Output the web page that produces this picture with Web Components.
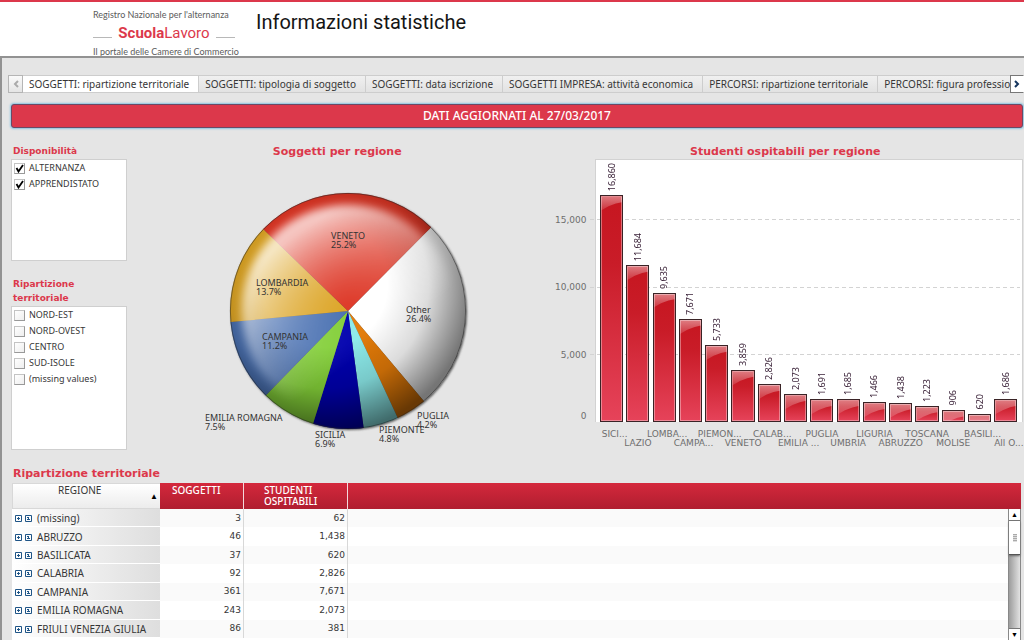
<!DOCTYPE html>
<html lang="it">
<head>
<meta charset="utf-8">
<title>Informazioni statistiche</title>
<style>
html, body { margin: 0; height: 100%; }
body { font-family: "Noto Sans", sans-serif; font-size: 10px; color: #363636; background: #e5e5e5; }
</style>
</head>
<body>
<stats-page>
  <site-header slot="header">Informazioni statistiche</site-header>
  <sheet-tabs slot="tabs"></sheet-tabs>
  <info-banner slot="banner">DATI AGGIORNATI AL 27/03/2017</info-banner>
  <filter-list slot="filters" class="short" heading="Disponibilità" items="ALTERNANZA|APPRENDISTATO" checked></filter-list>
  <filter-list slot="filters" heading="Ripartizione territoriale" items="NORD-EST|NORD-OVEST|CENTRO|SUD-ISOLE|(missing values)"></filter-list>
  <pie-chart slot="pie">Soggetti per regione</pie-chart>
  <bar-chart slot="bars">Studenti ospitabili per regione</bar-chart>
  <region-table slot="table">Ripartizione territoriale</region-table>
</stats-page>

<script>
function define(name, render) {
  customElements.define(name, class extends HTMLElement {
    connectedCallback() {
      if (this.shadowRoot) return;
      this.attachShadow({ mode: 'open' }).innerHTML = render(this);
    }
  });
}

const heading = 'margin: 0; color: #dc384b; font: 700 11px/16px "DejaVu Sans", sans-serif;';

define('stats-page', () => `
<style>
:host { display: flex; flex-direction: column; height: 100vh; min-height: 600px; overflow: hidden; }
main { flex: 1; min-height: 0; display: flex; flex-direction: column; border-top: 2px solid #929292; border-left: 2px solid #929292; padding: 17px 0 0 9px; }
.banner { padding: 11px 1px 0 0; }
.row { display: grid; grid-template-columns: 116px 421fr 476fr; margin-top: 16px; padding-right: 1px; }
.filters { display: flex; flex-direction: column; gap: 16px; }
.table { flex: 1; min-height: 0; display: flex; margin-top: 16px; padding-right: 3px; }
::slotted([slot=table]) { flex: 1; }
</style>
<slot name="header"></slot>
<main>
  <slot name="tabs"></slot>
  <div class="banner"><slot name="banner"></slot></div>
  <div class="row">
    <div class="filters"><slot name="filters"></slot></div>
    <slot name="pie"></slot>
    <slot name="bars"></slot>
  </div>
  <div class="table"><slot name="table"></slot></div>
</main>`);

define('site-header', () => `
<style>
:host { display: flex; align-items: flex-start; height: 54px; background: #fff; border-top: 2px solid #dc384b; font-family: Roboto, sans-serif; }
.logo { width: 142px; margin-left: 93px; text-decoration: none; color: #5b5b5b; font: 9px/12px Lato, sans-serif; padding-top: 7px; white-space: nowrap; }
.logo > span { display: block; }
.logo .name { display: flex; align-items: center; justify-content: space-between; color: #dc384b; font: 15px/18px Roboto, sans-serif; margin: 3px 0 4px; }
.name i { width: 19px; height: 1px; background: #b8b8b8; margin-top: 8px; }
h1 { margin: 6px 0 0 21px; font-size: 20px; line-height: 28px; font-weight: 400; color: #151515; }
</style>
<a class="logo" href="#"><span>Registro Nazionale per l'alternanza</span>
<span class="name"><i></i><span><b>Scuola</b>Lavoro</span><i></i></span>
<span>Il portale delle Camere di Commercio</span></a>
<h1><slot></slot></h1>`);

define('sheet-tabs', () => {
  const names = ['SOGGETTI: ripartizione territoriale', 'SOGGETTI: tipologia di soggetto', 'SOGGETTI: data iscrizione',
    'SOGGETTI IMPRESA: attività economica', 'PERCORSI: ripartizione territoriale', 'PERCORSI: figura professionale'];
  return `
<style>
:host { display: flex; height: 18px; margin-left: -3px; }
button { font: inherit; color: inherit; margin: 0; cursor: pointer; box-sizing: border-box; }
.list { flex: 1; min-width: 0; display: flex; overflow: hidden; }
.list button { flex: none; white-space: nowrap; border: solid #cdcdcd; border-width: 1px 1px 1px 0; padding: 0 9px 0 6px; line-height: 15px; background: linear-gradient(#f0f0f0, #e2e2e2); }
.list button[aria-selected=true] { background: #fff; }
.nav { flex: none; width: 15px; padding: 0; border: 1px solid #b5b5b5; background: linear-gradient(#fafafa, #e4e4e4); display: grid; place-items: center; }
.next { width: 14px; border-color: #777 #fff #777 #777; background: #fff; }
svg { display: block; fill: none; stroke-width: 2; }
</style>
<button class="nav" aria-label="Precedente"><svg width="6" height="8" stroke="#aaa"><path d="M5 1L2 4L5 7"/></svg></button>
<div class="list" role="tablist">${names.map((n, i) => `<button role="tab" aria-selected="${i === 0}">${n}</button>`).join('')}</div>
<button class="nav next" aria-label="Successivo"><svg width="6" height="8" stroke="#16365f"><path d="M1 1L4 4L1 7"/></svg></button>`;
});

define('info-banner', () => `
<style>
:host { display: block; border: 1px solid #6a4a66; border-radius: 3px; box-shadow: 0 0 2px 1px #8cc4e0; background: #dc384b; color: #fff; font-size: 12px; line-height: 22px; font-weight: 500; text-align: center; }
</style>
<slot></slot>`);

define('filter-list', host => `
<style>
:host { display: block; }
fieldset { border: 0; margin: 0; padding: 0; min-width: 0; }
legend { padding: 0 0 0 2px; margin-bottom: 1px; width: 80px; color: #dc384b; font: 700 9px/14px "DejaVu Sans", sans-serif; }
.box { box-sizing: border-box; height: 144px; background: #fff; border: 1px solid #cfcfcf; padding: 0 0 0 2px; }
:host(.short) .box { height: 102px; }
label { display: flex; align-items: center; gap: 4px; height: 16px; font-size: 9px; line-height: 16px; }
input { appearance: none; box-sizing: border-box; width: 11px; height: 11px; margin: 0; border: 1px solid #b4b4b4; border-color: #c4c4c4 #999 #999 #c4c4c4; background: linear-gradient(135deg, #fff, #eee); }
input:checked { background: url('data:image/svg+xml,<svg xmlns="http://www.w3.org/2000/svg" viewBox="0 0 9 9"><path d="M1.5 4L3.5 7.5L8 1" fill="none" stroke="black" stroke-width="1.8"/></svg>') #fff; }
</style>
<fieldset><legend>${host.getAttribute('heading')}</legend>
<div class="box">${host.getAttribute('items').split('|').map(t =>
  `<label><input type="checkbox"${host.hasAttribute('checked') ? ' checked' : ''}>${t}</label>`).join('')}</div></fieldset>`);

define('pie-chart', () => {
  const cx = 348, cy = 311, r = 118;
  const slices = [
    ['Other', 26.4, '#ffffff', 406, 313], ['PUGLIA', 4.2, '#e27a08', 417, 419], ['PIEMONTE', 4.8, '#8ceaea', 379, 433],
    ['SICILIA', 6.9, '#0000ae', 315, 438], ['EMILIA ROMAGNA', 7.5, '#83cf38', 205, 421], ['CAMPANIA', 11.2, '#4a71b2', 262, 340],
    ['LOMBARDIA', 13.7, '#dca424', 256, 286], ['VENETO', 25.2, '#dd3524', 331, 239]];
  let at = 44.8;
  const pt = a => { const t = a * Math.PI / 180; return (cx + r * Math.sin(t)).toFixed(2) + ' ' + (cy - r * Math.cos(t)).toFixed(2); };
  const paths = slices.map(([, v, c]) => {
    const from = at; at += v * 360 / 99.9;
    return `<path d="M${cx} ${cy}L${pt(from)}A${r} ${r} 0 0 1 ${pt(at)}Z" fill="${c}"/>`;
  }).join('');
  const labels = slices.map(([n, v, , x, y]) => `<text x="${x}" y="${y}">${n}<tspan x="${x}" y="${y + 9}">${v}%</tspan></text>`).join('');
  return `
<style>
:host { display: flex; flex-direction: column; align-items: center; }
h2 { ${heading} }
svg { display: block; width: 300px; height: 280px; margin-top: 10px; }
text { font-size: 9px; fill: #333; }
</style>
<h2><slot></slot></h2>
<svg viewBox="187 170 300 280" role="img" aria-label="Soggetti per regione">
<defs>
<radialGradient id="shade" gradientUnits="userSpaceOnUse" cx="325" cy="285" r="148"><stop offset=".42" stop-opacity="0"/><stop offset=".7" stop-opacity=".14"/><stop offset="1" stop-opacity=".54"/></radialGradient>
<radialGradient id="gloss" gradientUnits="userSpaceOnUse" cx="348" cy="311" r="108"><stop offset="0" stop-color="#fff" stop-opacity=".05"/><stop offset="1" stop-color="#fff" stop-opacity=".8"/></radialGradient>
<linearGradient id="fade" gradientUnits="userSpaceOnUse" x1="290" y1="240" x2="368" y2="350"><stop offset="0" stop-color="#fff"/><stop offset="1" stop-color="#000"/></linearGradient>
<mask id="m" maskUnits="userSpaceOnUse" x="187" y="170" width="300" height="280"><rect x="187" y="170" width="300" height="280" fill="url(#fade)"/></mask>
<filter id="soft"><feGaussianBlur stdDeviation="4"/></filter>
<filter id="drop"><feGaussianBlur stdDeviation="1.2"/></filter>
</defs>
<circle cx="349" cy="312" r="118" fill="#555" filter="url(#drop)"/>
${paths}
<circle cx="348" cy="311" r="118" fill="url(#shade)"/>
<g mask="url(#m)"><circle cx="348" cy="311" r="106" fill="url(#gloss)" filter="url(#soft)"/></g>
<circle cx="348" cy="311" r="117.6" fill="none" stroke="#222" stroke-opacity=".5"/>
${labels}
</svg>`;
});

define('bar-chart', () => {
  const max = 19500;
  const data = [['SICI...', 16860], ['LAZIO', 11684], ['LOMBA...', 9635], ['CAMPA...', 7671], ['PIEMON...', 5733], ['VENETO', 3859],
    ['CALAB...', 2826], ['EMILIA ...', 2073], ['PUGLIA', 1691], ['UMBRIA', 1685], ['LIGURIA', 1466], ['ABRUZZO', 1438],
    ['TOSCANA', 1223], ['MOLISE', 906], ['BASILI...', 620], ['All O...', 1686]];
  const fmt = v => v.toLocaleString('en-US');
  return `
<style>
:host { display: grid; grid-template-columns: 39px 8px 1fr; grid-template-rows: 15px 263px 28px; }
h2 { grid-column: 1 / 4; text-align: center; ${heading} }
.axis { position: relative; color: #6e6e6e; font: 9px/12px "DejaVu Sans", sans-serif; text-align: right; }
.axis span { position: absolute; right: 0; transform: translateY(50%); }
.axis span:first-child { transform: none; }
.plot { grid-column: 3; position: relative; box-sizing: border-box; background: #fff; border: solid #d2d2d2; border-width: 1px 1px 0 1px; padding: 0 3px; display: grid; grid-template-columns: repeat(16, 1fr); }
.line { position: absolute; left: -6px; right: 2px; height: 1px; background: repeating-linear-gradient(90deg, #d3d3d3 0 4px, transparent 4px 7px); }
.col { position: relative; display: flex; flex-direction: column; justify-content: flex-end; align-items: center; min-width: 0; }
.val { writing-mode: vertical-rl; transform: rotate(180deg); font-size: 9px; line-height: 12px; color: #3a2238; margin-bottom: 4px; }
.bar { width: 88%; box-sizing: border-box; border: 1px solid #3a2326; background: linear-gradient(#c61620, #c91c28 30%, #e6435a); box-shadow: inset 0 0 0 1px #ffffff60; overflow: hidden; }
.bar::before { content: ""; display: block; height: 14px; background: linear-gradient(#ffffff70, #ffffff20); clip-path: polygon(0 0, 100% 0, 100% 40%, 70% 50%, 35% 70%, 0 100%); }
.names { grid-column: 3; display: grid; grid-template-columns: repeat(16, 1fr); padding: 6px 4px 0; font: 9px/12px "DejaVu Sans", sans-serif; color: #6e6e6e; }
.names span { display: flex; justify-content: center; white-space: nowrap; min-width: 0; }
.names span:nth-child(even) { padding-top: 9px; }
.names .cut { padding-left: 6px; }
</style>
<h2><slot></slot></h2>
<div class="axis">${[0, 5000, 10000, 15000].map(v => `<span style="bottom:${v / max * 100}%">${fmt(v)}</span>`).join('')}</div>
<div class="plot">${[5000, 10000, 15000].map(v => `<div class="line" style="bottom:${v / max * 100}%"></div>`).join('')}
${data.map(([, v]) => `<div class="col"><span class="val">${fmt(v)}</span><div class="bar" style="height:${v / max * 100}%"></div></div>`).join('')}</div>
<div class="names">${data.map(([n]) => `<span${n.endsWith('...') ? ' class="cut"' : ''}>${n}</span>`).join('')}</div>`;
});

define('region-table', () => {
  const rows = [['(missing)', '3', '62'], ['ABRUZZO', '46', '1,438'], ['BASILICATA', '37', '620'], ['CALABRIA', '92', '2,826'],
    ['CAMPANIA', '361', '7,671'], ['EMILIA ROMAGNA', '243', '2,073'], ['FRIULI VENEZIA GIULIA', '86', '381']];
  const plus = '<button aria-label="Espandi"><svg width="7" height="7"><path d="M.5 .5h6v6h-6zM2 3.5h3M3.5 2v3"/></svg></button>';
  const down = '<button aria-label="Espandi tutto"><svg width="7" height="7"><path d="M.5 .5h6v6h-6zM2 2.5h2M3.5 2v3M2 4.5h3"/></svg></button>';
  return `
<style>
:host { display: flex; flex-direction: column; min-width: 0; }
h2 { ${heading} padding-left: 2px; }
.frame { display: grid; grid-template-columns: 1fr 13px; grid-template-rows: 26px 1fr; flex: 1; min-height: 0; margin-top: 1px; margin-left: 1px; background: #fff; }
.view { grid-area: 1 / 1 / 3 / 3; overflow: hidden; }
table { width: 100%; height: 155px; border-collapse: separate; border-spacing: 0; table-layout: fixed; }
th, td { padding: 0; font-weight: 400; }
thead th { height: 26px; vertical-align: top; text-align: left; color: #fff; line-height: 11px; background: linear-gradient(#d4283c, #b01e30); font-weight: 500; box-sizing: border-box; padding: 2px 0 0 12px; border-right: 1px solid #f4d8dc; }
thead th:nth-child(3) { padding-left: 20px; }
thead th:last-child { border: 0; }
thead th.first { background: linear-gradient(#fff, #ececec); color: #363636; font-weight: 400; padding: 1px 2px 0 45px; border: 1px solid #d8d8d8; border-right: 0; }
.sort { float: right; font-size: 8px; margin-top: 5px; color: #000; }
tbody th { text-align: left; background: linear-gradient(90deg, #fff, #dedede); border-bottom: 1px solid #fff; }
tbody th div { display: flex; align-items: center; gap: 2px; padding: 1px 0 0 3px; line-height: 16px; }
tbody th span { padding-left: 2px; }
tbody td { text-align: right; padding: 0 2px 1px 0; font: 9px/14px "DejaVu Sans", sans-serif; border-right: 1px solid #d8d8d8; }
tbody td:last-child { border: 0; }
tbody tr:nth-child(odd) td { background: #fafafa; }
tbody button { display: block; border: 0; padding: 2px 0 0; background: none; height: 10px; }
svg { display: block; width: 8px; height: 8px; overflow: visible; fill: none; stroke: #1f5587; }
.scroll { grid-area: 2 / 2; position: relative; display: flex; flex-direction: column; border: solid #888; border-width: 0 1px; box-sizing: border-box; background: linear-gradient(90deg, #9c9c9c, #e2e2e2); min-height: 0; }
.scroll button { flex: none; height: 12px; border: 0; border-bottom: 1px solid #777; background: #fff; padding: 0; font-size: 7px; line-height: 10px; color: #000; }
.thumb { height: 33px; background: #fff; border-bottom: 1px solid #555; box-shadow: 0 1px 2px #666; display: grid; place-items: center; }
.thumb::before { content: ""; width: 4px; height: 8px; background: repeating-linear-gradient(#aaa 0 1px, #ddd 1px 2px); }
.scroll button:last-child { margin-top: auto; border: 0; border-top: 1px solid #777; }
</style>
<h2><slot></slot></h2>
<div class="frame">
<div class="view"><table>
<colgroup><col style="width:148px"><col style="width:84px"><col style="width:104px"><col></colgroup>
<thead><tr><th class="first"><span class="sort">▲</span>REGIONE</th><th>SOGGETTI</th><th>STUDENTI<br>OSPITABILI</th><th></th></tr></thead>
<tbody>${rows.map(([n, a, b]) => `<tr><th scope="row"><div>${plus}${down}<span>${n}</span></div></th><td>${a}</td><td>${b}</td><td></td></tr>`).join('')}</tbody>
</table></div>
<div class="scroll"><button aria-label="Su">▲</button><div class="thumb"></div><button aria-label="Giù">▼</button></div>
</div>`;
});
</script>
</body>
</html>
